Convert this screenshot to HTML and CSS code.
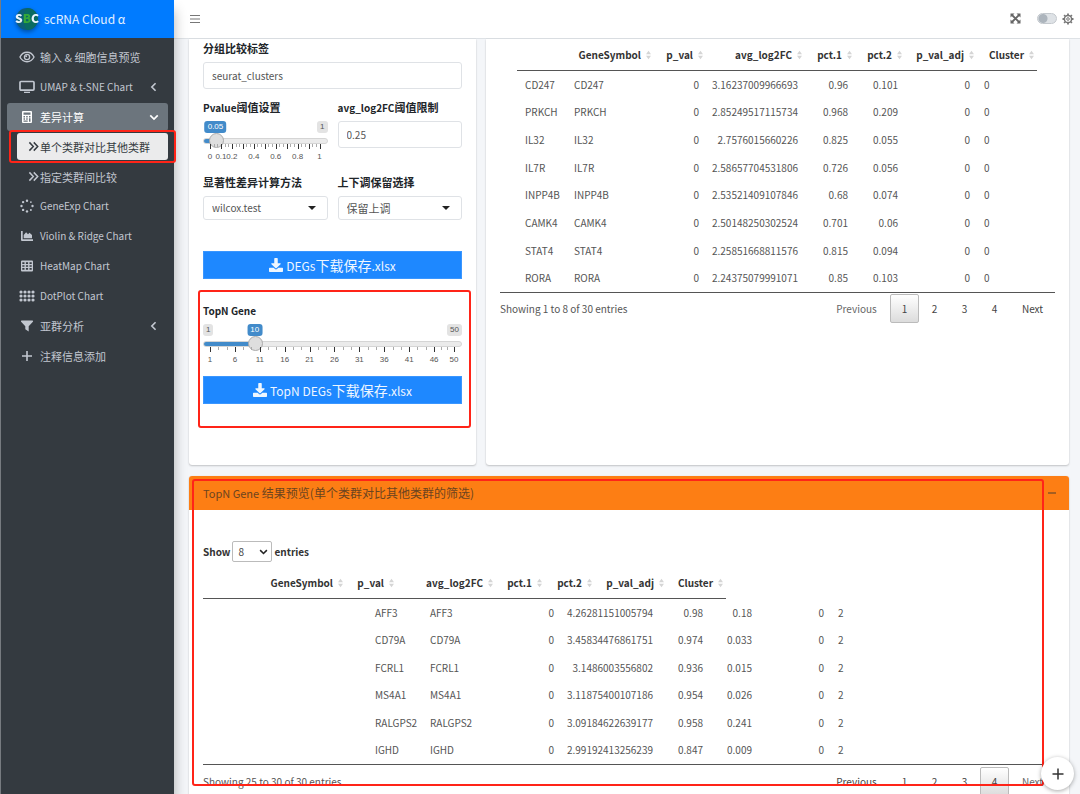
FILE: index.html
```html
<!DOCTYPE html>
<html lang="zh-CN">
<head>
<meta charset="utf-8">
<meta name="viewport" content="width=device-width, initial-scale=1">
<title>scRNA Cloud α</title>
<link rel="stylesheet" href="styles.css">
</head>
<body>
<svg class="defs" aria-hidden="true">
  <symbol id="download" viewBox="0 0 512 512"><path fill="currentColor" d="M216 0h80c13.300 0 24 10.700 24 24v168h87.700c17.800 0 26.700 21.500 14.100 34.100L269.700 378.300c-7.500 7.500-19.800 7.500-27.300 0L90.100 226.100c-12.600-12.600-3.700-34.100 14.100-34.100H192V24c0-13.300 10.700-24 24-24zm296 376v112c0 13.300-10.700 24-24 24H24c-13.300 0-24-10.700-24-24V376c0-13.300 10.700-24 24-24h146.700l49 49c20.100 20.100 52.500 20.100 72.600 0l49-49H488c13.300 0 24 10.700 24 24z"/></symbol>
  <symbol id="chev-left" viewBox="0 0 8 12"><path d="M6.500 1.500L2 6l4.500 4.500" fill="none" stroke="currentColor" stroke-width="2"/></symbol>
  <symbol id="chev-down" viewBox="0 0 12 8"><path d="M1.500 1.500L6 6l4.500-4.500" fill="none" stroke="currentColor" stroke-width="2"/></symbol>
  <symbol id="raquo" viewBox="0 0 12 12"><path d="M1.500 1.500L5.800 6l-4.300 4.500M6.300 1.500L10.600 6l-4.300 4.500" fill="none" stroke="currentColor" stroke-width="1.600"/></symbol>
  <symbol id="caret" viewBox="0 0 8 4"><path d="M0 0h8L4 4z" fill="currentColor"/></symbol>
  <symbol id="sort" viewBox="0 0 6 12"><path d="M3 1l3 4H0zM3 11l3-4H0z" fill="currentColor"/></symbol>
</svg>

<aside class="sidebar">
  <a class="brand" href="#">
    <svg class="brand-logo" viewBox="0 0 24 24" aria-hidden="true">
      <circle cx="12" cy="12" r="11" fill="#0d5f78"/>
      <path d="M12 1a11 11 0 0 1 0 22c-5-4-5-18 0-22z" fill="#0a6b62"/>
      <text class="logo-text" x="12" y="16" text-anchor="middle"><tspan fill="#e8f4ff">S</tspan><tspan fill="#35a83a">B</tspan><tspan fill="#e8f4ff">C</tspan></text>
    </svg>
    <span>scRNA Cloud α</span>
  </a>
  <nav>
    <ul class="nav">
      <li><a class="item" href="#">
        <svg class="icon" viewBox="0 0 16 12"><path d="M1 6c3-6.300 11-6.300 14 0-3 6.300-11 6.300-14 0z" fill="none" stroke="currentColor" stroke-width="1.400"/><circle cx="8" cy="6" r="2.600" fill="none" stroke="currentColor" stroke-width="1.300"/><circle cx="7.200" cy="5.200" r="1" fill="currentColor"/></svg>
        <span>输入 &amp; 细胞信息预览</span></a></li>
      <li><a class="item" href="#">
        <svg class="icon" viewBox="0 0 16 13"><rect x="1" y="1" width="14" height="8.600" rx="1" fill="none" stroke="currentColor" stroke-width="1.700"/><path d="M5 11.200h6v1.300H5z" fill="currentColor"/></svg>
        <span class="latin">UMAP &amp; t-SNE Chart</span><svg class="chev" viewBox="0 0 8 12"><use href="#chev-left"/></svg></a></li>
      <li class="group"><a class="item open" href="#">
        <svg class="icon" viewBox="0 0 16 14"><path fill="currentColor" fill-rule="evenodd" d="M4 1h8q1 0 1 1v10q0 1-1 1H4q-1 0-1-1V2q0-1 1-1zm.5 1.500v2.300h7V2.500zM4.500 6v1.500H6V6zm2.700 0v1.500h1.500V6zM10 6v1.500h1.500V6zM4.500 8.200v1.500H6V8.200zm2.700 0v1.500h1.500V8.200zM10 8.200v3.500h1.500V8.200zm-5.500 2.200v1.300h4.200v-1.300z"/></svg>
        <span>差异计算</span><svg class="chev wide" viewBox="0 0 12 8"><use href="#chev-down"/></svg></a>
        <ul class="sub">
          <li><a class="subitem active" href="#"><svg class="raquo" viewBox="0 0 12 12"><use href="#raquo"/></svg><span>单个类群对比其他类群</span></a></li>
          <li><a class="subitem" href="#"><svg class="raquo" viewBox="0 0 12 12"><use href="#raquo"/></svg><span>指定类群间比较</span></a></li>
        </ul></li>
      <li><a class="item" href="#">
        <svg class="icon" viewBox="0 0 16 14"><g fill="currentColor"><circle cx="8" cy="1.700" r="1.200"/><circle cx="11.900" cy="3.100" r=".9"/><circle cx="13.500" cy="7" r="1.200"/><circle cx="11.900" cy="10.900" r="1"/><circle cx="8" cy="12.400" r="1.200"/><circle cx="4.100" cy="10.900" r="1.200"/><circle cx="2.500" cy="7" r="1.200"/><circle cx="4.100" cy="3.100" r="1.200"/></g></svg>
        <span class="latin">GeneExp Chart</span></a></li>
      <li><a class="item" href="#">
        <svg class="icon" viewBox="0 0 16 12"><path fill="currentColor" d="M2 1h1.700v8.300H14V11H3q-1 0-1-1zM4.700 8.300V5l2.400-2.700L9 4.200l1.500-1.500L13 5v3.300z"/></svg>
        <span class="latin">Violin &amp; Ridge Chart</span></a></li>
      <li><a class="item" href="#">
        <svg class="icon" viewBox="0 0 16 13"><path fill="currentColor" fill-rule="evenodd" d="M3 1h10q1 0 1 1v9q0 1-1 1H3q-1 0-1-1V2q0-1 1-1zm.3 1.800v1.700h2.200V2.800zm3.600 0v1.700h2.200V2.800zm3.600 0v1.700h2.200V2.800zM3.300 5.700v1.600h2.200V5.700zm3.600 0v1.600h2.200V5.700zm3.600 0v1.600h2.200V5.700zM3.300 8.600v1.700h2.200V8.600zm3.600 0v1.700h2.200V8.600zm3.600 0v1.700h2.200V8.600z"/></svg>
        <span class="latin">HeatMap Chart</span></a></li>
      <li><a class="item" href="#">
        <svg class="icon" viewBox="0 0 16 12"><path d="M2 2h13M2 6h13M2 10h13" stroke="currentColor" stroke-width="3.200" stroke-linecap="round" stroke-dasharray="0 4"/></svg>
        <span class="latin">DotPlot Chart</span></a></li>
      <li><a class="item" href="#">
        <svg class="icon" viewBox="0 0 16 13"><path fill="currentColor" d="M2.500 1h11q1 .3.400 1.200L9.700 6.800V12L6.300 9.800v-3L2.100 2.200Q1.600 1.300 2.500 1z"/></svg>
        <span>亚群分析</span><svg class="chev" viewBox="0 0 8 12"><use href="#chev-left"/></svg></a></li>
      <li><a class="item" href="#">
        <svg class="icon" viewBox="0 0 16 12"><path d="M8 1v10M3 6h10" stroke="currentColor" stroke-width="1.600"/></svg>
        <span>注释信息添加</span></a></li>
    </ul>
  </nav>
  <div class="mark mark-nav"></div>
</aside>

<div class="page">
  <header class="topbar">
    <button class="plain" type="button" aria-label="菜单"><svg width="10" height="10" viewBox="0 0 10 10"><path d="M0 1.500h10M0 5h10M0 8.500h10" stroke="#777" stroke-width="1.200"/></svg></button>
    <div class="tools">
      <button class="plain" type="button" aria-label="全屏"><svg width="11" height="11" viewBox="0 0 11 11"><path d="M1.500 1.500l8 8M9.500 1.500l-8 8" stroke="#666" stroke-width="1.800"/><path fill="#666" d="M.5.500h4l-4 4zM10.500.500v4l-4-4zM.5 10.500v-4l4 4zM10.500 10.500h-4l4-4z"/></svg></button>
      <input class="switch" type="checkbox" aria-label="深色模式">
      <button class="plain" type="button" aria-label="设置"><svg width="12" height="12" viewBox="0 0 12 12"><circle cx="6" cy="6" r="3.600" fill="none" stroke="#777" stroke-width="1.500"/><circle cx="6" cy="6" r="1.300" fill="none" stroke="#777"/><path d="M6 .5v1.500M6 10v1.500M.5 6h1.500M10 6h1.500M2.100 2.100l1.100 1.100M8.800 8.800l1.100 1.100M9.900 2.100L8.800 3.200M3.200 8.800l-1.100 1.100" stroke="#777" stroke-width="1.800"/></svg></button>
    </div>
  </header>

  <main class="content">
    <div class="row">
      <section class="card params">
        <form class="form">
          <div class="field">
            <label for="group">分组比较标签</label>
            <input class="box" id="group" type="text" value="seurat_clusters">
          </div>
          <div class="pair">
            <div class="field">
              <label for="pvalue"><span class="latin">Pvalue</span>阈值设置</label>
              <div class="slider" data-min="0" data-max="1" data-value="0.05" data-major="0,0.1,0.2,0.3,0.4,0.5,0.6,0.7,0.8,0.9,1" data-labels="0,0.1,0.2,0.4,0.6,0.8,1">
                <div class="bubbles"><span class="end right">1</span><output class="bubble">0.05</output></div>
                <input id="pvalue" type="range" min="0" max="1" step="0.01" value="0.05">
                <div class="scale"></div>
              </div>
            </div>
            <div class="field">
              <label for="fc"><span class="latin">avg_log2FC</span>阈值限制</label>
              <input class="box" id="fc" type="text" value="0.25">
            </div>
          </div>
          <div class="pair">
            <div class="field">
              <label for="method">显著性差异计算方法</label>
              <div class="select"><select class="box short" id="method"><option>wilcox.test</option></select><svg class="caret" viewBox="0 0 8 4"><use href="#caret"/></svg></div>
            </div>
            <div class="field">
              <label for="keep">上下调保留选择</label>
              <div class="select"><select class="box short cjk" id="keep"><option>保留上调</option></select><svg class="caret" viewBox="0 0 8 4"><use href="#caret"/></svg></div>
            </div>
          </div>
          <button class="download first" type="button"><svg viewBox="0 0 512 512"><use href="#download"/></svg><span><span class="latin">DEGs</span>下载保存<span class="latin">.xlsx</span></span></button>
          <div class="topn">
            <div class="field">
              <label for="topn"><span class="latin">TopN Gene</span></label>
              <div class="slider" data-min="1" data-max="50" data-value="10" data-major="1,6,11,16,21,26,31,36,41,46,50" data-labels="1,6,11,16,21,26,31,36,41,46,50">
                <div class="bubbles"><span class="end">1</span><span class="end right">50</span><output class="bubble">10</output></div>
                <input id="topn" type="range" min="1" max="50" value="10">
                <div class="scale"></div>
              </div>
            </div>
            <button class="download" type="button"><svg viewBox="0 0 512 512"><use href="#download"/></svg><span><span class="latin">TopN DEGs</span>下载保存<span class="latin">.xlsx</span></span></button>
            <div class="mark mark-topn"></div>
          </div>
        </form>
      </section>

      <section class="card results">
        <div class="table-wrap">
          <table class="grid full">
            <colgroup><col class="c49"><col class="c88"><col class="c52"><col class="c99"><col class="c50"><col class="c50"><col class="c72"><col class="c60"></colgroup>
            <thead><tr><th></th><th>GeneSymbol<svg viewBox="0 0 6 12"><use href="#sort"/></svg></th><th>p_val<svg viewBox="0 0 6 12"><use href="#sort"/></svg></th><th>avg_log2FC<svg viewBox="0 0 6 12"><use href="#sort"/></svg></th><th>pct.1<svg viewBox="0 0 6 12"><use href="#sort"/></svg></th><th>pct.2<svg viewBox="0 0 6 12"><use href="#sort"/></svg></th><th>p_val_adj<svg viewBox="0 0 6 12"><use href="#sort"/></svg></th><th>Cluster<svg viewBox="0 0 6 12"><use href="#sort"/></svg></th></tr></thead>
            <tbody>
              <tr><td>CD247</td><td>CD247</td><td>0</td><td>3.16237009966693</td><td>0.96</td><td>0.101</td><td>0</td><td>0</td></tr>
              <tr><td>PRKCH</td><td>PRKCH</td><td>0</td><td>2.85249517115734</td><td>0.968</td><td>0.209</td><td>0</td><td>0</td></tr>
              <tr><td>IL32</td><td>IL32</td><td>0</td><td>2.7576015660226</td><td>0.825</td><td>0.055</td><td>0</td><td>0</td></tr>
              <tr><td>IL7R</td><td>IL7R</td><td>0</td><td>2.58657704531806</td><td>0.726</td><td>0.056</td><td>0</td><td>0</td></tr>
              <tr><td>INPP4B</td><td>INPP4B</td><td>0</td><td>2.53521409107846</td><td>0.68</td><td>0.074</td><td>0</td><td>0</td></tr>
              <tr><td>CAMK4</td><td>CAMK4</td><td>0</td><td>2.50148250302524</td><td>0.701</td><td>0.06</td><td>0</td><td>0</td></tr>
              <tr><td>STAT4</td><td>STAT4</td><td>0</td><td>2.25851668811576</td><td>0.815</td><td>0.094</td><td>0</td><td>0</td></tr>
              <tr><td>RORA</td><td>RORA</td><td>0</td><td>2.24375079991071</td><td>0.85</td><td>0.103</td><td>0</td><td>0</td></tr>
            </tbody>
          </table>
        </div>
        <div class="table-foot">
          <span class="info">Showing 1 to 8 of 30 entries</span>
          <div class="pages"><button class="wide-btn dim">Previous</button><button class="current">1</button><button>2</button><button>3</button><button>4</button><button class="wide-btn">Next</button></div>
        </div>
      </section>
    </div>

    <section class="card preview">
      <div class="card-head"><h2><span class="latin">TopN Gene</span> 结果预览(单个类群对比其他类群的筛选)</h2><button class="plain" type="button" aria-label="折叠"><svg width="8" height="8" viewBox="0 0 8 8"><path d="M0 4h8" stroke="#6b4a2a" stroke-width="1.200"/></svg></button></div>
      <div class="preview-body">
        <div class="length"><label for="len">Show</label><div class="select"><select id="len"><option>8</option></select><svg class="caret open-caret" viewBox="0 0 12 8"><use href="#chev-down"/></svg></div><label for="len">entries</label></div>
        <table class="grid head">
          <colgroup><col class="c55"><col class="c88"><col class="c51"><col class="c99"><col class="c49"><col class="c50"><col class="c72"><col class="c59"></colgroup>
          <thead><tr><th></th><th>GeneSymbol<svg viewBox="0 0 6 12"><use href="#sort"/></svg></th><th>p_val<svg viewBox="0 0 6 12"><use href="#sort"/></svg></th><th>avg_log2FC<svg viewBox="0 0 6 12"><use href="#sort"/></svg></th><th>pct.1<svg viewBox="0 0 6 12"><use href="#sort"/></svg></th><th>pct.2<svg viewBox="0 0 6 12"><use href="#sort"/></svg></th><th>p_val_adj<svg viewBox="0 0 6 12"><use href="#sort"/></svg></th><th>Cluster<svg viewBox="0 0 6 12"><use href="#sort"/></svg></th></tr></thead>
        </table>
        <div class="table-wrap">
          <table class="grid body">
            <colgroup><col class="c55"><col class="c88"><col class="c51"><col class="c99"><col class="c50"><col class="c49"><col class="c72"><col class="c60"></colgroup>
            <tbody>
              <tr><td>AFF3</td><td>AFF3</td><td>0</td><td>4.26281151005794</td><td>0.98</td><td>0.18</td><td>0</td><td>2</td></tr>
              <tr><td>CD79A</td><td>CD79A</td><td>0</td><td>3.45834476861751</td><td>0.974</td><td>0.033</td><td>0</td><td>2</td></tr>
              <tr><td>FCRL1</td><td>FCRL1</td><td>0</td><td>3.1486003556802</td><td>0.936</td><td>0.015</td><td>0</td><td>2</td></tr>
              <tr><td>MS4A1</td><td>MS4A1</td><td>0</td><td>3.11875400107186</td><td>0.954</td><td>0.026</td><td>0</td><td>2</td></tr>
              <tr><td>RALGPS2</td><td>RALGPS2</td><td>0</td><td>3.09184622639177</td><td>0.958</td><td>0.241</td><td>0</td><td>2</td></tr>
              <tr><td>IGHD</td><td>IGHD</td><td>0</td><td>2.99192413256239</td><td>0.847</td><td>0.009</td><td>0</td><td>2</td></tr>
            </tbody>
          </table>
        </div>
        <div class="table-foot">
          <span class="info">Showing 25 to 30 of 30 entries</span>
          <div class="pages"><button class="wide-btn">Previous</button><button>1</button><button>2</button><button>3</button><button class="current">4</button><button class="wide-btn dim">Next</button></div>
        </div>
      </div>
      <div class="mark mark-preview"></div>
    </section>
  </main>
</div>
<button class="fab" type="button" aria-label="添加"><svg width="12" height="12" viewBox="0 0 12 12"><path d="M6 .5v11M.5 6h11" stroke="#333" stroke-width="1.500"/></svg></button>
<script src="scale.js"></script>
</body>
</html>
```
FILE: styles.css
```css
* { box-sizing: border-box; }
body {
  margin: 0; height: 100vh; overflow: hidden; display: flex;
  background: #f4f6f9; color: #212529;
  font: 11px/16px "Noto Sans CJK SC", "Noto Sans", sans-serif;
}
button, input, select { font: inherit; color: inherit; margin: 0; }
ul { list-style: none; margin: 0; padding: 0; }
a { color: inherit; text-decoration: none; }
.defs { position: absolute; width: 0; height: 0; }
.plain { border: 0; background: none; padding: 0; display: flex; }
.latin { font-size: 10px; }
.mark { position: absolute; border: 2px solid #ff2418; border-radius: 3px; pointer-events: none; z-index: 4; }

.sidebar {
  position: relative; z-index: 3; flex: 0 0 174px; height: 100vh;
  background: #343a40; color: #c2c7d0; border-left: 1px solid #777b80;
  box-shadow: 0 10px 12px rgba(0,0,0,.3);
}
.brand { display: flex; align-items: center; gap: 5px; height: 38px; padding-left: 14px; background: #007bff; color: #e3f0ff; font-size: 12px; font-weight: 400; }
.brand-logo { width: 24px; height: 24px; border-radius: 50%; overflow: visible; filter: drop-shadow(0 2px 2px rgba(0,0,0,.35)); }
.logo-text { font: 900 12px "Noto Sans CJK SC", sans-serif; }
.nav { display: flex; flex-direction: column; gap: 2px; padding: 5px 6px 0; }
.item { display: flex; align-items: center; height: 28px; padding: 0 9px 0 12px; gap: 5px; border-radius: 3px; }
.item.open { background: #6c757d; color: #fff; }
.icon { width: 16px; height: 14px; flex: none; }
.chev { width: 7px; height: 10px; margin-left: auto; margin-right: 2px; }
.chev.wide { width: 10px; height: 7px; margin-right: 0; }
.group { height: 87px; }
.sub { padding-left: 10px; margin-top: 2px; }
.subitem { display: flex; align-items: center; gap: 1px; height: 27px; margin-bottom: 3px; padding-left: 11px; border-radius: 3px; }
.subitem.active { background: #ebebec; color: #343a40; }
.raquo { width: 11px; height: 11px; }
.mark-nav { left: 8px; right: -2px; top: 130px; height: 33px; }

.page { flex: 1; min-width: 0; height: 100vh; overflow: hidden; display: flex; flex-direction: column; }
.topbar { flex: 0 0 39px; display: flex; align-items: center; justify-content: space-between; padding: 0 6px 1px 16px; background: #fff; border-bottom: 1px solid #dee2e6; }
.tools { display: flex; align-items: center; }
.switch { appearance: none; width: 20px; height: 11px; margin: 0 5px 0 16px; border-radius: 6px; border: 1px solid #c3c8cd; background: radial-gradient(circle at 5px 50%, #adb5bd 4px, #dee2e6 5px); }
.content { flex: 1; padding: 0 11px 0 15px; }
.row { display: flex; gap: 10px; margin-bottom: 11px; }
.card { position: relative; background: #fff; border-radius: 3px; box-shadow: 0 0 1px rgba(0,0,0,.13), 0 1px 2px rgba(0,0,0,.2); }
.row .card { border-radius: 0 0 3px 3px; }
.params { flex: 1 1 0; padding: 1px 14px 61px; }
.results { flex: 0 1 583px; padding: 0 14px; }

.field { display: flex; flex-direction: column; flex: 1 1 0; min-width: 0; }
.field > label { font-weight: 700; line-height: 16px; height: 16px; margin-bottom: 6px; }
.box { width: 100%; height: 27px; border: 1px solid #dfe2e6; border-radius: 3px; background: #fff; color: #555; padding: 0 8px; font-size: 10px; }
.box.short { height: 24px; }
.box.cjk { font-size: 11px; }
.pair { display: flex; gap: 10px; margin-top: 10px; }
.select { position: relative; }
.select select { appearance: none; background: #fff; }
.caret { position: absolute; right: 12px; top: 10px; width: 8px; height: 4px; color: #222; pointer-events: none; }

.slider { position: relative; font: 8px/11px "Liberation Sans", Arial, sans-serif; color: #555; height: 43px; }
.bubbles { height: 12px; position: relative; }
.end, .bubble { position: absolute; top: 0; height: 12px; line-height: 12px; padding: 0 3px; border-radius: 3px; background: #e3e3e3; }
.end.right { right: 0; }
.bubble { left: calc(7px + (100% - 15px) * var(--part)); transform: translateX(-50%); background: #428bca; color: #fff; }
.slider input { appearance: none; display: block; width: 100%; height: 15px; background: none; }
.slider input::-webkit-slider-runnable-track {
  height: 6px; border-radius: 5px; border: 1px solid #d5d5d5;
  background: linear-gradient(90deg, #428bca calc(7px + (100% - 15px) * var(--part)), #ebebeb 0) border-box;
}
.slider input::-webkit-slider-thumb { appearance: none; width: 15px; height: 15px; margin-top: -6px; border-radius: 50%; border: 1px solid #ababab; background: #dedede; }
.scale { position: relative; height: 14px; margin: -4px 8px 0 7px; }
.tick { position: absolute; top: 0; width: 1px; height: 3px; background: #aaa; }
.tick.major { height: 5px; background: #333; }
.tick-label { position: absolute; top: 7px; transform: translateX(-50%); }

.download { display: flex; width: 100%; height: 28px; align-items: center; justify-content: center; gap: 3px; border: 1px solid #3a96ff; background: #1e88ff; color: #eef6ff; font-size: 14px; padding: 0; }
.download svg { width: 14px; height: 14px; }
.download .latin { font-size: 12px; }
.download.first { margin-top: 31px; }
.topn { position: relative; margin-top: 23px; }
.topn .field { flex: none; }
.topn .slider { height: 52px; }
.mark-topn { left: -5px; right: -9px; top: -12px; bottom: -24px; }

.grid { border-collapse: separate; border-spacing: 0; table-layout: fixed; font-size: 10px; line-height: 14px; color: #555; }
.grid th { position: relative; padding: 0 13px 0 0; height: 32px; text-align: right; font-weight: 700; color: #333; border-bottom: 1px solid #555; white-space: nowrap; }
.grid th svg { position: absolute; right: 3px; top: 10px; width: 5px; height: 12px; color: #d5d5d5; }
.grid td { padding: 0 7px 0 0; text-align: right; }
.grid td:first-child, .grid td:nth-child(2) { padding-left: 8px; text-align: left; }
.grid td:last-child { padding-left: 7px; text-align: left; }
.full { width: 520px; height: 253px; margin-left: 17px; }
.head { width: 523px; }
.body { width: 524px; height: 165px; margin-left: 164px; }
.c49 { width: 49px; } .c50 { width: 50px; } .c51 { width: 51px; } .c52 { width: 52px; } .c55 { width: 55px; }
.c59 { width: 59px; } .c60 { width: 60px; } .c72 { width: 72px; } .c88 { width: 88px; } .c99 { width: 99px; }
.table-wrap { border-bottom: 1px solid #555; }
.table-foot { display: flex; justify-content: space-between; padding-top: 2px; color: #555; font-size: 10px; }
.row .table-foot { padding-top: 1px; }
.info { line-height: 30px; }
.pages { display: flex; gap: 1px; }
.pages button { width: 29px; height: 29px; border: 1px solid transparent; border-radius: 2px; background: none; padding: 0; color: #444; }
.pages .wide-btn { width: 45px; }
.pages .wide-btn:first-child { width: 65px; }
.pages .dim { color: #666; }
.pages .current { border-color: #bbb; background: linear-gradient(#fff, #dcdcdc); }

.card-head { display: flex; align-items: center; justify-content: space-between; height: 34px; padding: 0 13px 1px 14px; background: #fd7e14; border-radius: 3px 3px 0 0; }
.card-head h2 { margin: 0; font-size: 12px; font-weight: 400; color: #6b4420; }
.card-head .latin { font-size: 11px; }
.preview-body { padding: 31px 14px 0; }
.length { display: flex; align-items: center; gap: 2px; font-size: 10px; font-weight: 700; color: #333; height: 21px; margin-bottom: 5px; }
.length select { width: 40px; height: 21px; border: 1px solid #bbb; border-radius: 2px; padding: 0 5px; color: #444; font-weight: 400; }
.open-caret { width: 9px; height: 6px; right: 4px; top: 8px; }
.mark-preview { left: 3px; right: 25px; top: 3px; height: 307px; }
.fab { position: fixed; right: 6px; bottom: 4px; z-index: 5; width: 33px; height: 33px; border: 0; border-radius: 50%; background: #fff; display: flex; align-items: center; justify-content: center; padding: 0; box-shadow: 0 1px 4px rgba(0,0,0,.35); }
```
FILE: scale.js
```js
// Builds the tick marks and numbers below each slider.
document.querySelectorAll('.slider').forEach(function (slider) {
  var min = +slider.dataset.min, max = +slider.dataset.max;
  var major = slider.dataset.major.split(',').map(Number);
  var scale = slider.querySelector('.scale');
  function part(v) { return (v - min) / (max - min); }
  function add(cls, v, text) {
    var el = document.createElement('span');
    el.className = cls;
    el.style.left = part(v) * 100 + '%';
    if (text) el.textContent = text;
    scale.appendChild(el);
  }
  slider.style.setProperty('--part', part(+slider.dataset.value));
  major.forEach(function (v, i) {
    add('tick major', v);
    if (i + 1 < major.length) {
      var step = (major[i + 1] - v) / 3;
      add('tick', v + step);
      add('tick', v + step * 2);
    }
  });
  slider.dataset.labels.split(',').forEach(function (t) { add('tick-label', +t, t); });
});
```
